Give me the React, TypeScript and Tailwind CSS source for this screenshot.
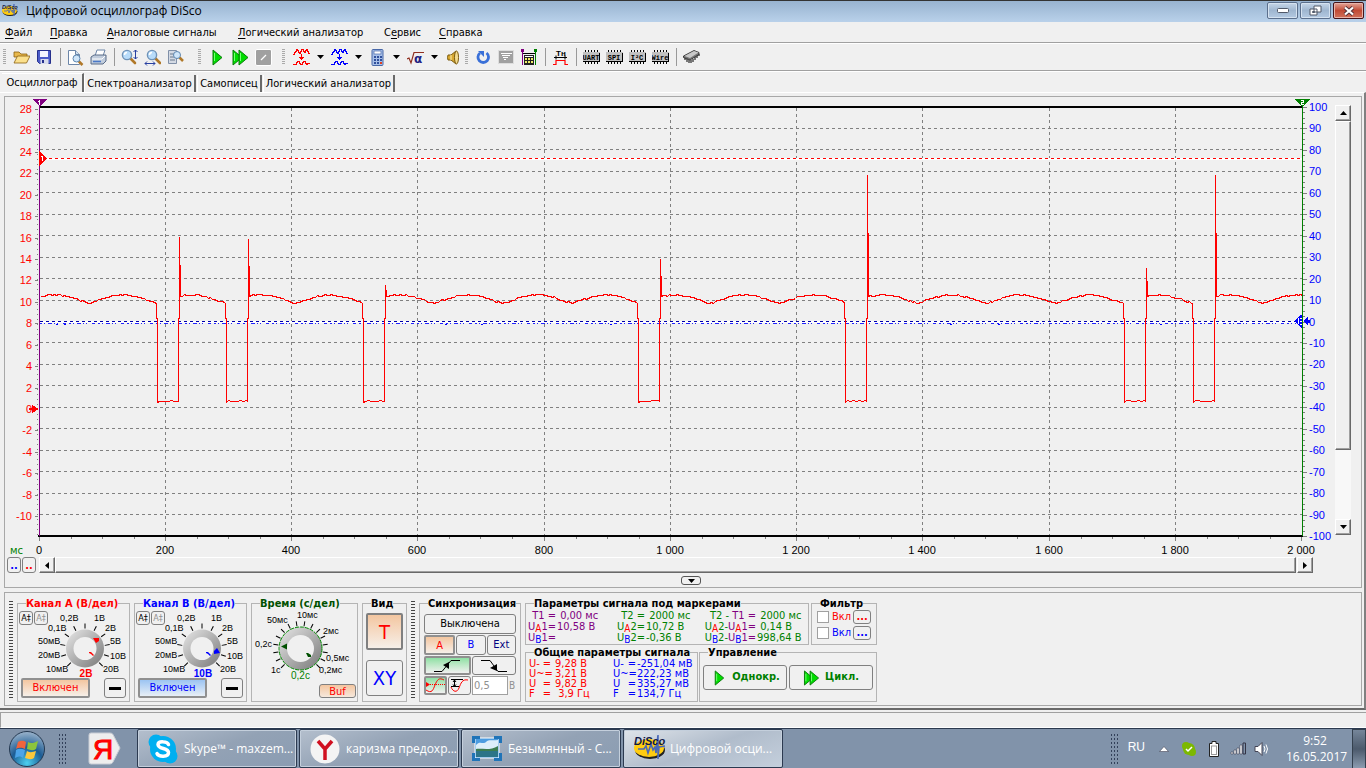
import React from 'react';

const UI = "font-['DejaVu_Sans_Condensed','Noto_Sans',sans-serif]";

const menus = [
  { pre: '', key: 'Ф', rest: 'айл', cls: 'w-[45px]' },
  { pre: '', key: 'П', rest: 'равка', cls: 'w-[57px]' },
  { pre: '', key: 'А', rest: 'налоговые сигналы', cls: 'w-[131px]' },
  { pre: '', key: 'Л', rest: 'огический анализатор', cls: 'w-[146px]' },
  { pre: 'С', key: 'е', rest: 'рвис', cls: 'w-[55px]' },
  { pre: '', key: 'С', rest: 'правка', cls: 'w-[55px]' },
];

// ---------- signal data ----------

const PULSES = [
  { drop: 157, rise: 178, top: 236 },
  { drop: 226, rise: 247, top: 238 },
  { drop: 363, rise: 384, top: 284 },
  { drop: 638, rise: 659, top: 258 },
  { drop: 845, rise: 866, top: 174 },
  { drop: 1124, rise: 1145, top: 267 },
  { drop: 1193, rise: 1214, top: 174 },
];

const noise = (n: number) => {
  const v = Math.sin(n * 12.9898) * 43758.5453;
  return v - Math.floor(v);
};

const ripple = (x: number) => {
  const s = Math.abs(Math.sin((Math.PI * (x - 88)) / 69.06));
  return Math.round(303 - 8.5 * Math.pow(s, 1.1) + (noise(x) - 0.5) * 1.4);
};

function buildSignal() {
  const pts: string[] = [];
  let x = 40;
  for (const p of PULSES) {
    for (; x < p.drop; x += 2) pts.push(`${x},${ripple(x)}`);
    pts.push(`${p.drop - 1},303`, `${p.drop - 1},318`, `${p.drop},318`, `${p.drop},402`);
    for (let b = p.drop + 2; b < p.rise; b += 3) pts.push(`${b},${noise(b) > 0.6 ? 400 : 401}`);
    const mid = Math.round(p.top + (296 - p.top) * 0.48);
    pts.push(`${p.rise},401`, `${p.rise},318`, `${p.rise + 1},318`, `${p.rise + 1},${p.top}`);
    pts.push(`${p.rise + 1},${mid}`, `${p.rise + 2},${mid}`, `${p.rise + 2},296`);
    x = p.rise + 4;
  }
  for (; x <= 1302; x += 2) pts.push(`${x},${ripple(x)}`);
  return pts.join(' ');
}

const SIGNAL = buildSignal();
const rows = Array.from({ length: 21 }, (_, i) => i);

function Scope() {
  return (
    <svg viewBox="5 97 1330 460" className="block h-auto min-w-0 flex-1" shapeRendering="crispEdges">
      {/* grid */}
      <g stroke="#808080" strokeDasharray="3 3">
        {rows.slice(1, 20).map((i) => {
          const y = Math.floor(107 + 21.45 * i) + 0.5;
          return <line key={i} x1="40" x2="1302" y1={y} y2={y} />;
        })}
        {rows.slice(1, 10).map((i) => {
          const x = Math.floor(39 + 126.25 * i) + 0.5;
          return <line key={i} y1="108" y2="535" x1={x} x2={x} />;
        })}
      </g>
      <rect x="40" y="106" width="1263" height="2" fill="#000" />
      <rect x="38" y="535" width="1265" height="2" fill="#000" />

      {/* left axis */}
      <g fontFamily="Liberation Sans, sans-serif" fontSize="11" fill="#f00" textAnchor="end">
        {rows.slice(0, 20).map((i) => {
          const y = Math.round(109 + 21.43 * i);
          return (
            <g key={i}>
              <text x="32" y={y + 4}>{28 - 2 * i}</text>
              <rect x="35" y={y} width="3" height="1" fill="#808080" />
            </g>
          );
        })}
      </g>
      <line x1="37.5" x2="37.5" y1="109" y2="535" stroke="#808080" strokeDasharray="1 4" />

      {/* right axis */}
      <g fontFamily="Liberation Sans, sans-serif" fontSize="11" fill="#00f">
        {rows.map((i) => {
          const y = Math.round(107 + 21.45 * i);
          return (
            <g key={i}>
              <text x="1309" y={y + 4}>{100 - 10 * i}</text>
              <rect x="1303" y={y} width="4" height="1" fill="#808080" />
              {i < 20 && [1, 2, 3].map((m) => (
                <rect key={m} x="1303" y={Math.round(y + 5.36 * m)} width="2" height="1" fill="#808080" />
              ))}
            </g>
          );
        })}
      </g>

      {/* time axis */}
      <g fontFamily="Liberation Sans, sans-serif" fontSize="11" textAnchor="middle">
        {rows.slice(0, 11).map((i) => {
          const x = Math.floor(39 + 126.25 * i);
          const v = i * 200;
          return (
            <g key={i}>
              <text x={x} y="554">{v < 1000 ? v : `${Math.floor(v / 1000)} ${String(v % 1000).padStart(3, '0')}`}</text>
              <rect x={x} y="537" width="1" height="4" fill="#808080" />
              {i < 10 && [1, 2, 3].map((m) => (
                <rect key={m} x={Math.round(x + 31.5 * m)} y="537" width="1" height="2" fill="#808080" />
              ))}
            </g>
          );
        })}
      </g>
      <text x="10" y="554" fontFamily="DejaVu Sans, sans-serif" fontSize="10" fill="#008000">мс</text>

      {/* trigger level and channel B */}
      <rect x="47" y="158" width="1256" height="2" fill="#fff" />
      <line x1="49" x2="1302" y1="158.5" y2="158.5" stroke="#f00" strokeDasharray="3 3" />
      <rect x="40" y="321" width="1256" height="2" fill="#fff" />
      <line x1="40" x2="1296" y1="321.5" y2="321.5" stroke="#00a" strokeDasharray="3 3" />
      <line x1="40" x2="1296" y1="323.5" y2="323.5" stroke="#22f" strokeDasharray="2 2 1 3 4 2 1 2 1 5 3 3" />
      <g fill="#00f">
        {[56, 64, 445, 481, 610, 950, 998, 1160].map((x) => (
          <rect key={x} x={x} y="324" width="2" height="1" />
        ))}
      </g>

      <polyline points={SIGNAL} fill="none" stroke="#f00" transform="translate(.5 .5)" />

      {/* markers */}
      <rect x="39" y="106" width="1" height="430" fill="#800080" />
      <rect x="1302" y="106" width="1" height="430" fill="#008000" />
      <path d="M32 99h15l-7 7h-1z" fill="#800080" />
      <path d="M1295 99h15l-7 8h-1z" fill="#008000" />
      <path d="M39 100h1v5h-1zM38 101h1v1h-1z" fill="#fff" />
      <path d="M1301 100h3v3h-2v1h2v1h-3v-3h2v-1h-2z" fill="#fff" />
      <path d="M39 151l8 7-8 8z" fill="#f00" />
      <path d="M41 156h2v5h-1v-4h-1z" fill="#fff" />
      <path d="M29 408h3v-3l7 4-7 4v-3h-3z" fill="#f00" />
      <path d="M1303 321l5-4v3h2v3h-2v2z" fill="#00f" />
      <path d="M1294 321l7-6h1v13h-1z" fill="#00f" />
      <path d="M1298 318h1v6h-1zM1300 318h2v1h-2zM1300 321h2v1h-2zM1300 324h2v1h-2z" fill="#fff" />
    </svg>
  );
}

// ---------- small parts ----------

function Grip({ className = '' }: { className?: string }) {
  return (
    <div className={`flex flex-none items-center ${className}`}>
      <div className="h-4 w-[3px] bg-[repeating-linear-gradient(#aaa_0_1px,#f0f0f0_1px_2px)]" />
    </div>
  );
}

function Sep() {
  return (
    <div className="flex w-2 flex-none items-center justify-center">
      <div className="h-[18px] w-px bg-[#999]" />
    </div>
  );
}

function Tool({ label, children, drop }: { label: string; children: React.ReactNode; drop?: boolean }) {
  return (
    <>
      <button aria-label={label} className="flex w-[23px] flex-none items-center justify-center">
        <svg width="17" height="17" viewBox="0 0 17 17">{children}</svg>
      </button>
      {drop && (
        <button aria-label={`${label} ▾`} className="flex w-[15px] flex-none items-center justify-center">
          <svg width="7" height="4" viewBox="0 0 7 4"><path d="M0 0h7L3.500 4z" /></svg>
        </button>
      )}
    </>
  );
}

function Lens({ x = 6, y = 6 }: { x?: number; y?: number }) {
  return (
    <g>
      <path d={`M${x + 3} ${y + 3}l5 5`} stroke="#b07828" strokeWidth="2.6" strokeLinecap="round" />
      <circle cx={x} cy={y} r="4.6" fill="#b8dcfa" stroke="#6f93b8" strokeWidth="1.4" />
      <path d={`M${x - 2.5} ${y}a2.6 2.6 0 0 1 2.5-2.5`} stroke="#fff" fill="none" strokeWidth="1.500" />
    </g>
  );
}

function Waves({ color }: { color: string }) {
  return (
    <g stroke={color} fill="none" shapeRendering="crispEdges">
      <path d="M0 5.500h1v-2h1v-1h1v-2h1v1h1v2h1v1h1v-2h1v-2h2v2h1v1h1v-2h1v-1h1v2h1v2h2" />
      <path d="M0 15.500h3v-2h1v-1h2v2h1v1h2v-2h1v-1h2v2h1v1h1v-1h3" />
      <path d="M8.500 5v3" />
      <path d="M6 8h5v1h-1v1H9v1H8v-1H7V9H6z" fill={color} stroke="none" />
    </g>
  );
}

function BusChip({ name }: { name: string }) {
  return (
    <g>
      <g shapeRendering="crispEdges">
        <path d="M2.500 1v3M5.500 1v3M8.500 1v3M11.500 1v3M14.500 1v3M2.500 12v3M5.500 12v3M8.500 12v3M11.500 12v3M14.500 12v3" stroke="#000" />
        <rect x="0" y="3" width="17" height="10" fill="#c0c0c0" />
        <path d="M0 12.500h16.500V4" stroke="#000" fill="none" />
      </g>
      <text x="8" y="11" textAnchor="middle" fontFamily="Liberation Mono, monospace" fontWeight="bold" fontSize="7">{name}</text>
    </g>
  );
}

function Play({ double }: { double?: boolean }) {
  const tri = 'M1 1l9 7.500-9 7.500z';
  return (
    <g fill="#0d0" stroke="#0a7a0a">
      <path d={tri} />
      {double && <path d={tri} transform="translate(6)" />}
      <path d="M2.500 4v8" stroke="#7f7" />
      {double && <path d="M8.500 4v8" stroke="#7f7" />}
    </g>
  );
}

function DiscoLogo({ size }: { size: string }) {
  return (
    <svg viewBox="0 0 32 32" className={size}>
      <ellipse cx="16" cy="17" rx="15" ry="9" fill="#222" />
      <ellipse cx="15" cy="15" rx="15" ry="9" fill="#fc1" />
      <path d="M4 16h6l2-3 2 7 3-9 2 6 2-3 1 6 2-18v24l1-12 6-1" stroke="#4a68b8" strokeWidth="1.6" fill="none" />
      <text x="0" y="12" fontFamily="Liberation Sans, sans-serif" fontWeight="bold" fontStyle="italic" fontSize="11" fill="#101848">DiSco</text>
    </svg>
  );
}

function Group({ title, color = 'text-black', className, children }: { title: string; color?: string; className: string; children: React.ReactNode }) {
  return (
    <fieldset className={`min-w-0 border border-[#b4b4b4] ${className}`}>
      <legend className={`ml-2 text-[11px] leading-[13px] font-bold whitespace-nowrap ${color}`}>{title}</legend>
      {children}
    </fieldset>
  );
}

const flat = 'flex items-center justify-center rounded-[3px] border border-[#808080] bg-[#f0f0f0]';
const raised = 'bg-[#f0f0f0] border border-t-white border-l-white border-r-[#696969] border-b-[#696969] shadow-[inset_-1px_-1px_0_#a0a0a0]';

const knobLabels: [string, number, number][] = [
  ['10мВ', 46, 82], ['20мВ', 38, 68], ['50мВ', 38, 54], ['0,1В', 48, 41], ['0,2В', 60, 31],
  ['1В', 94, 31], ['2В', 105, 41], ['5В', 110, 54], ['10В', 110, 69], ['20В', 103, 82],
];

function ChannelKnob({ id, color, value, pointer }: { id: string; color: string; value: string; pointer: string }) {
  return (
    <svg viewBox="18 20 111 68" className="block h-[68px] w-full">
      <defs>
        <linearGradient id={id} x1="0" y1="0" x2="1" y2="1">
          <stop offset="0" stopColor="#e8e8e8" />
          <stop offset="1" stopColor="#777" />
        </linearGradient>
      </defs>
      {rows.slice(0, 11).map((i) => (
        <path key={i} d="M85 33.500v5" stroke="#000" transform={`rotate(${-135 + 27 * i} 85 58.500)`} />
      ))}
      <circle cx="85" cy="58.500" r="19" fill={`url(#${id})`} />
      <circle cx="85" cy="58.500" r="11.500" fill="#f0f0f0" />
      <path d={pointer} fill={color} />
      <path d="M89 62h2l3 3-1 1-2-2-2-1z" fill={color} />
      <g fontFamily="Liberation Sans, sans-serif" fontSize="9">
        {knobLabels.map(([t, x, y]) => <text key={t} x={x} y={y}>{t}</text>)}
      </g>
      <text x="86" y="87" textAnchor="middle" fontFamily="Liberation Sans, sans-serif" fontSize="10" fontWeight="bold" fill={color}>{value}</text>
    </svg>
  );
}

function Channel({ title, color, hex, id, value, pointer, on }: { title: string; color: string; hex: string; id: string; value: string; pointer: string; on: string }) {
  return (
    <Group title={title} color={color} className="w-[113px]">
      <div className="relative">
        <ChannelKnob id={id} color={hex} value={value} pointer={pointer} />
        <div className="absolute top-px left-px flex gap-px">
          <button className={`${flat} h-[14px] w-[14px] text-[9px] leading-none`}>A‡</button>
          <button className={`${flat} h-[14px] w-[14px] text-[9px] leading-none text-[#909090]`}>A‡</button>
        </div>
      </div>
      <div className="flex justify-between px-[3px]">
        <button className={`flex h-5 w-[69px] items-center justify-center rounded-[2px] border-2 border-[#909090] text-[11px] ${color} ${on}`}>Включен</button>
        <button aria-label="−" className={`${flat} h-5 w-[22px]`}><span className="h-[3px] w-3 bg-black" /></button>
      </div>
    </Group>
  );
}

function TimeKnob() {
  return (
    <svg viewBox="3 20 105 71" className="block h-[71px] w-full">
      <defs>
        <linearGradient id="kt" x1="0" y1="0" x2="1" y2="1">
          <stop offset="0" stopColor="#e8e8e8" />
          <stop offset="1" stopColor="#777" />
        </linearGradient>
      </defs>
      {rows.slice(0, 16).map((i) => (
        <path key={i} d="M51.500 31v5" stroke="#000" transform={`rotate(${-135 + 18 * i} 51.500 58.500)`} />
      ))}
      <circle cx="51.500" cy="58.500" r="21.500" fill="url(#kt)" stroke="#080" strokeDasharray="4 1" />
      <circle cx="51.500" cy="58.500" r="13.500" fill="#f0f0f0" />
      <path d="M32 56.500l6-3v6z" fill="#005000" />
      <path d="M57 63h2l3 2v2h-3z" fill="#005000" />
      <g fontFamily="Liberation Sans, sans-serif" fontSize="9">
        <text x="18" y="33">50мс</text>
        <text x="48" y="28">10мс</text>
        <text x="74" y="44">2мс</text>
        <text x="6" y="57">0,2с</text>
        <text x="77" y="71">0,5мс</text>
        <text x="22" y="83">1с</text>
        <text x="70" y="83">0,2мс</text>
        <text x="42" y="89" fontSize="10" fill="#008000">0,2с</text>
      </g>
    </svg>
  );
}

const A = () => <sub className="bottom-[-2px] text-[10px] leading-none text-[#f00]">A</sub>;
const B = () => <sub className="bottom-[-2px] text-[10px] leading-none text-[#00f]">B</sub>;
const P = ({ children }: { children: React.ReactNode }) => <span className="text-[#800080]">{children}</span>;

const totals = [
  ['U-', '9,28 В', '-251,04 мВ'],
  ['U~', '3,21 В', '222,23 мВ'],
  ['U', '9,82 В', '335,27 мВ'],
  ['F', ' 3,9 Гц', '134,7 Гц'],
];

function Controls() {
  return (
    <div className="flex h-[114px] flex-none gap-1 border border-[#a8a8a8] px-1 pt-1 pb-[3px]">
      <div className="mt-1 mb-1 h-[98px] w-1 bg-[repeating-linear-gradient(#444_0_1px,#f0f0f0_1px_3px)]" />
      <Channel title="Канал A (В/дел)" color="text-[#f00]" hex="#f00" id="ka" value="2В" pointer="M93 48h6v3l-3 2z" on="bg-linear-to-b from-[#f3c6a0] to-[#f6efe8]" />
      <Channel title="Канал B (В/дел)" color="text-[#00f]" hex="#00f" id="kb" value="10В" pointer="M97 61l3-3 3 5-6 1z" on="bg-linear-to-b from-[#9cc4f2] to-[#e8eff6]" />
      <Group title="Время (с/дел)" color="text-[#005000]" className="w-[107px]">
        <TimeKnob />
        <div className="flex justify-end pt-[3px] pr-px">
          <button className="flex h-[14px] w-[37px] items-center justify-center rounded-[3px] border border-[#808080] bg-linear-to-b from-[#f3c6a0] to-[#f6e8dc] text-[11px] leading-none text-[#f00]">Buf</button>
        </div>
      </Group>
      <Group title="Вид" className="w-[45px]">
        <div className="flex flex-col items-center gap-[10px] pt-[3px]">
          <button className="h-[37px] w-[37px] rounded-[2px] border-2 border-[#808080] bg-linear-to-b from-[#f3c6a0] to-[#f6efe8] text-xl leading-none text-[#f00]">T</button>
          <button className={`${flat} h-9 w-[37px] text-xl leading-none text-[#00f]`}>XY</button>
        </div>
      </Group>
      <div className="mt-1 mb-1 h-[98px] w-1 bg-[repeating-linear-gradient(#444_0_1px,#f0f0f0_1px_3px)]" />
      <Group title="Синхронизация" className="w-[102px]">
        <div className="flex flex-col gap-px px-1 pt-1 text-[11px]">
          <button className={`${flat} h-5`}>Выключена</button>
          <div className="flex gap-px">
            <button className="h-5 flex-1 rounded-[2px] border-2 border-[#909090] bg-linear-to-b from-[#f3c6a0] to-[#f6efe8] leading-none text-[#f00]">A</button>
            <button className={`${flat} h-5 flex-1 text-[#00f]`}>B</button>
            <button className={`${flat} h-5 flex-1 text-[#000080]`}>Ext</button>
          </div>
          <div className="flex gap-px">
            <button aria-label="↗" className="flex h-[19px] flex-1 items-center justify-center rounded-[2px] border-2 border-[#909090] bg-linear-to-b from-[#8ee0a4] to-[#f0f0f0]">
              <svg width="28" height="14" viewBox="0 0 28 14"><path d="M1 12.500h8L18 1.500h9" stroke="#000" fill="none" /><path d="M16 3l0 7-6-4z" /></svg>
            </button>
            <button aria-label="↘" className={`${flat} h-[19px] flex-1`}>
              <svg width="28" height="14" viewBox="0 0 28 14"><path d="M1 1.500h9L18 12.500h9" stroke="#000" fill="none" /><path d="M17 5l0 7-7-3z" /></svg>
            </button>
          </div>
          <div className="flex items-center gap-px">
            <button aria-label="~" className="flex h-[19px] w-[23px] items-center justify-center rounded-[2px] border-2 border-[#909090] bg-linear-to-b from-[#8ee0a4] to-[#f0f0f0]">
              <svg width="19" height="15" viewBox="0 0 19 15"><path d="M0 12c6 4 7 0 9-5s4-8 9-5" stroke="#f00" fill="none" /><path d="M4 6.500h15" stroke="#f00" strokeDasharray="1 1" /><path d="M0 4l4 2.500L0 9z" fill="#f00" /></svg>
            </button>
            <button aria-label="↕" className={`${flat} h-[19px] w-[23px]`}>
              <svg width="19" height="15" viewBox="0 0 19 15"><path d="M1 9c2 5 6 6 8 1s3-9 9-8" stroke="#f00" fill="none" /><path d="M1 1.500h12M1 8.500h8M4.500 2v6M3 4l1.500-2L6 4M3 6.500l1.500 2 1.500-2" stroke="#000" fill="none" /></svg>
            </button>
            <label className="flex items-center text-[#909090]">
              <input defaultValue="0,5" className="h-[19px] w-9 border border-[#a0a0a0] bg-white px-px text-[11px]" />
              <span className="pl-px text-[10px]">В</span>
            </label>
          </div>
        </div>
      </Group>
      <div className="flex flex-col gap-px">
        <div className="flex gap-[2px]">
          <Group title="Параметры сигнала под маркерами" className="h-12 w-[284px]">
            <div className="grid grid-cols-[28px_58px_29px_57px_52px_auto] gap-x-px pl-[2px] text-[11px] leading-[11px] whitespace-pre text-[#008000]">
              <span className="text-right"><P>T1 =</P></span><P> 0,00 мс</P>
              <span className="text-right">T2 =</span><span> 2000 мс</span>
              <span className="text-right">T2 - <P>T1 =</P></span><span> 2000 мс</span>
              <span className="text-right"><P>U<A />1=</P></span><P>10,58 В</P>
              <span className="text-right">U<A />2=</span><span>10,72 В</span>
              <span className="text-right">U<A />2-<P>U<A />1=</P></span><span> 0,14 В</span>
              <span className="text-right"><P>U<B />1=</P></span><span />
              <span className="text-right">U<B />2=</span><span>-0,36 В</span>
              <span className="text-right">U<B />2-<P>U<B />1=</P></span><span>998,64 В</span>
            </div>
          </Group>
          <Group title="Фильтр" className="h-12 w-[66px]">
            <div className="flex flex-col gap-[2px] pl-[5px] text-[11px] leading-[14px]">
              {[['text-[#f00]', 'a'], ['text-[#00f]', 'b']].map(([c, k]) => (
                <div key={k} className={`flex items-center gap-[2px] ${c}`}>
                  <label className="flex items-center gap-[3px]">
                    <input type="checkbox" className="h-3 w-3 appearance-none border border-[#a0a0a0] bg-white" />
                    Вкл
                  </label>
                  <button className={`${flat} h-[14px] w-[18px] font-bold`}>...</button>
                </div>
              ))}
            </div>
          </Group>
        </div>
        <div className="flex gap-px">
          <Group title="Общие параметры сигнала" className="h-14 w-[173px]">
            <table className="ml-[3px] text-[11px] leading-[10px] whitespace-pre">
              <tbody>
                {totals.map(([name, a, b]) => (
                  <tr key={name}>
                    <td className="w-[26px] p-0 text-[#f00]"><div className="flex w-[22px] justify-between"><span>{name}</span><span>=</span></div></td>
                    <td className="w-[58px] p-0 text-[#f00]">{a}</td>
                    <td className="w-[24px] p-0 text-[#00f]"><div className="flex w-[23px] justify-between"><span>{name}</span><span>=</span></div></td>
                    <td className="p-0 text-[#00f]">{b}</td>
                  </tr>
                ))}
              </tbody>
            </table>
          </Group>
          <Group title="Управление" className="h-14 w-[178px]">
            <div className="flex gap-[2px] px-[3px] pt-[6px] text-[11px] font-bold text-[#008000]">
              <button className={`${flat} h-[25px] flex-1 gap-1`}>
                <svg width="18" height="16" viewBox="-4 0 18 17"><Play /></svg>Однокр.
              </button>
              <button className={`${flat} h-[25px] flex-1 gap-1`}>
                <svg width="18" height="16" viewBox="0 0 18 17"><Play double /></svg>Цикл.
              </button>
            </div>
          </Group>
        </div>
      </div>
    </div>
  );
}

// ---------- window chrome ----------

function TitleBar() {
  const btn = 'flex h-[17px] w-[31px] items-center justify-center rounded-[2px] border border-[#5b6f8c] bg-linear-to-b from-[#c6d6e8] via-[#9fb6d0] to-[#b4cae2] shadow-[inset_0_0_0_1px_#d5e2f0]';
  return (
    <header className="flex h-[22px] flex-none items-start border-t border-[#333] bg-linear-to-b from-[#98b3d0] to-[#b9d1ea] font-['Open_Sans','Noto_Sans',sans-serif]">
      <div className="pt-[2px] pl-[2px]"><DiscoLogo size="h-4 w-4" /></div>
      <h1 className="flex-1 pl-2 text-[12px] leading-[20px]">Цифровой осциллограф DiSco</h1>
      <div className="flex gap-[2px] pt-px pr-[2px]">
        <button aria-label="Свернуть" className={btn}>
          <svg width="12" height="5" viewBox="0 0 12 5"><rect x=".5" y=".5" width="11" height="4" rx="1" fill="#fff" stroke="#505868" /></svg>
        </button>
        <button aria-label="Восстановить" className={btn}>
          <svg width="13" height="12" viewBox="0 0 13 12"><path d="M5 1h7v6H5zM1 4h7v6H1z" fill="#fff" stroke="#505868" /><path d="M3.500 6.500h2v1h-2z" fill="#9fb6d0" stroke="#505868" /></svg>
        </button>
        <button aria-label="Закрыть" className="flex h-[17px] w-[31px] items-center justify-center rounded-[2px] border border-[#46141a] bg-linear-to-b from-[#e3a498] via-[#c14a35] to-[#d0705a] shadow-[inset_0_0_0_1px_#e8b4aa]">
          <svg width="12" height="10" viewBox="0 0 12 10"><path d="M2 1.500l8 7M10 1.500l-8 7" stroke="#503038" strokeWidth="4" /><path d="M2 1.500l8 7M10 1.500l-8 7" stroke="#fff" strokeWidth="2.200" /></svg>
        </button>
      </div>
    </header>
  );
}

function Toolbar() {
  return (
    <div className="flex h-7 flex-none border-b border-white pb-px shadow-[inset_0_-1px_0_#a0a0a0]">
      <Grip className="w-[10px] pl-[3px]" />
      <Tool label="Открыть">
        <path d="M1 3h5l2 2h6v3H1z" fill="#e8b84c" stroke="#8a6010" strokeWidth=".8" />
        <path d="M1 14L4.500 7H17l-3.500 7z" fill="#fbe08c" stroke="#8a6010" strokeWidth=".8" />
      </Tool>
      <Tool label="Сохранить">
        <path d="M1.500 1.500h13v13h-11l-2-2z" fill="#4c5cc8" stroke="#26308c" />
        <rect x="4" y="2" width="8" height="6" fill="#f4f6ff" />
        <rect x="4.500" y="10" width="8" height="5" fill="#d8dcec" /><rect x="6" y="11" width="2" height="3" fill="#26308c" />
      </Tool>
      <Sep />
      <Tool label="Просмотр">
        <path d="M1.500 1.500h7l4 4v10h-11z" fill="#fff" stroke="#6c86a8" /><path d="M8.500 1.500v4h4" fill="#cfe0f0" stroke="#6c86a8" />
        <path d="M11.500 12l4 4" stroke="#b07828" strokeWidth="2.500" /><circle cx="9.500" cy="9.500" r="3.500" fill="#cfe6fa" stroke="#5f87b0" />
      </Tool>
      <Tool label="Печать">
        <path d="M5 7l2-6h8l-2 6z" fill="#fff" stroke="#6c86a8" />
        <path d="M1 8l3-2h12v6l-3 3H1z" fill="#c0ccdc" stroke="#5a6c88" /><path d="M2 10h10l3-3" stroke="#fff" fill="none" /><path d="M3 12.500h8" stroke="#4a78c8" strokeWidth="1.500" />
      </Tool>
      <Sep />
      <Tool label="Масштаб Y"><Lens /><path d="M14.500 1v9M12.500 3l2-2 2 2M12.500 8l2 2 2-2" stroke="#2840a0" fill="none" /></Tool>
      <Tool label="Масштаб X"><Lens x={8} /><path d="M1 14.500h10M3 12.500l-2 2 2 2M9 12.500l2 2-2 2" stroke="#2840a0" fill="none" /></Tool>
      <Tool label="Лупа">
        <path d="M1.500 1.500h8v13h-8z" fill="#d4dae4" stroke="#8090a8" /><path d="M3 5h5M3 8h5M3 11h5" stroke="#68788c" />
        <path d="M12 8l4 4" stroke="#b07828" strokeWidth="2.500" /><circle cx="10" cy="6" r="3.500" fill="#cfe6fa" stroke="#5f87b0" />
      </Tool>
      <Grip className="w-[19px] pl-[11px]" />
      <Tool label="Однократно"><g transform="translate(3)"><Play /></g></Tool>
      <Tool label="Циклически"><Play double /></Tool>
      <Tool label="Стоп"><rect x=".5" y=".5" width="16" height="16" rx="1.500" fill="#a0a0a0" stroke="#fff" /><path d="M6 11l5-5" stroke="#fff" strokeWidth="1.200" /></Tool>
      <Grip className="w-[15px] pl-[7px]" />
      <Tool label="Канал A" drop><Waves color="#f00" /></Tool>
      <Tool label="Канал B" drop><Waves color="#00f" /></Tool>
      <Tool label="Измерения" drop>
        <rect x="3" y=".5" width="11" height="16" rx="1" fill="#a8c0e8" stroke="#4868a8" /><rect x="5" y="2" width="7" height="3" fill="#fff" stroke="#4868a8" strokeWidth=".7" />
        <path d="M5 8h2M8 8h2M11 8h2M5 11h2M8 11h2M11 11h2M5 14h2M8 14h2" stroke="#30509c" strokeWidth="2" /><path d="M11 14h2" stroke="#e04020" strokeWidth="2" />
      </Tool>
      <Tool label="Функции" drop>
        <path d="M0 10l2-1 2 5L7 3.500h10" stroke="#903020" fill="none" strokeWidth="1.200" />
        <text x="7" y="14" fontFamily="DejaVu Sans, sans-serif" fontSize="12" fontWeight="bold" fill="#202080">α</text>
      </Tool>
      <Tool label="Звук">
        <path d="M3 6h3l5-4v13l-5-4H3q-1-2.500 0-5z" fill="#d8a830" stroke="#7c5c10" /><path d="M6 6v5" stroke="#fff0b0" /><ellipse cx="11.500" cy="8.500" rx="2" ry="6.500" fill="#f4dc90" stroke="#7c5c10" />
      </Tool>
      <Grip className="w-[7px]" />
      <Tool label="Обновить">
        <path d="M5 4a5.300 5.300 0 1 0 6.500 0" fill="none" stroke="#3a70d8" strokeWidth="2.800" /><path d="M3 2h6v6z" fill="#3a70d8" />
      </Tool>
      <Tool label="Фильтр"><rect x=".5" y="1.500" width="15" height="13" fill="#a0a0a0" stroke="#ddd" /><path d="M3 4.500h11M4 6.500h8M5 8.500h5M6 10.500h2" stroke="#fff" /></Tool>
      <Tool label="Маркеры">
        <g shapeRendering="crispEdges">
          <path d="M1.500 1v15" stroke="#800080" /><path d="M14.500 1v15" stroke="#008000" />
          <path d="M0 0h3v3H0z" fill="#800080" /><path d="M13 0h3v3h-3z" fill="#008000" /><path d="M2 4.500h12" stroke="#000" />
          <rect x="3" y="6" width="10" height="10" fill="#222" /><path d="M4 7.500h8" stroke="#fff" /><path d="M4 10h8M4 13h8" stroke="#ee6" strokeWidth="2" strokeDasharray="2 1" />
        </g>
      </Tool>
      <Sep />
      <Tool label="Период">
        <text x="4" y="7" fontFamily="Liberation Sans, sans-serif" fontWeight="bold" fontSize="8">Tн</text>
        <path d="M2 8.500h13M4 6.500v4M13 6.500v4" stroke="#000" /><path d="M1 15.500h3v-4h9v4h3" stroke="#f00" strokeWidth="1.200" fill="none" />
      </Tool>
      <Sep />
      <Tool label="UART"><BusChip name="UART" /></Tool>
      <Tool label="SPI"><BusChip name="SPI" /></Tool>
      <Tool label="I²C"><BusChip name="I²C" /></Tool>
      <Tool label="1-Wire"><BusChip name="Wire" /></Tool>
      <Sep />
      <Tool label="Микросхема">
        <path d="M2 9v2M4 10v3M6 11v3M8 11v3M10 10v3M12 8v3M14 6v3M16 5v2" stroke="#000" strokeDasharray="2 0" /><path d="M.500 7L11 1.500l5 2v2L7 11 .500 8.500z" fill="#777" stroke="#222" strokeWidth=".8" /><path d="M1.500 7L11 2l4.500 1.600L7 9z" fill="#c8c8c8" />
      </Tool>
    </div>
  );
}

function Tabs() {
  const idle = 'h-[17px] border-r-2 border-l border-r-[#696969] border-l-white leading-none';
  return (
    <nav className="flex h-5 flex-none items-end pl-[2px] text-[11px]">
      <button className="h-[19px] w-[82px] border-t border-r-2 border-t-white border-r-[#696969] pb-px leading-none">Осциллограф</button>
      <button className={`${idle} w-[112px]`}>Спектроанализатор</button>
      <button className={`${idle} ml-px w-[65px]`}>Самописец</button>
      <button className={`${idle} ml-px w-[132px]`}>Логический анализатор</button>
    </nav>
  );
}

function Taskbar() {
  const task = 'flex h-[39px] w-40 min-w-0 items-center gap-[6px] rounded-[2px] border border-[#2c3a50] px-[10px] shadow-[inset_0_0_0_1px_#c4cfdc]';
  const idle = 'bg-linear-160 from-[#b4bfcd] via-[#93a2b5] to-[#8a9cb2]';
  return (
    <footer className="flex h-10 flex-none items-center border-t border-[#2c3a50] bg-[#8193aa] font-['Open_Sans','Noto_Sans',sans-serif] text-[12px] text-white">
      <button aria-label="Пуск" className="ml-2 flex-none">
        <svg width="38" height="38" viewBox="0 0 38 38">
          <defs><radialGradient id="orb" cx=".5" cy=".9" r=".9"><stop offset="0" stopColor="#4cd0f0" /><stop offset=".5" stopColor="#1c5c94" /><stop offset="1" stopColor="#9cb4cc" /></radialGradient></defs>
          <circle cx="19" cy="19" r="17.500" fill="url(#orb)" stroke="#243850" />
          <path d="M10 12c3-2 6-1 8 0l-1 7c-3-1-5-2-9 0z" fill="#f0643c" />
          <path d="M20 12c3 2 6 1 10-1l-2 8c-3 2-6 1-9 0z" fill="#8cc43c" />
          <path d="M8 20c3-2 6-1 9 0l-2 8c-2-2-5-2-8 0z" fill="#4ca4e8" />
          <path d="M19 21c3 2 6 1 9 0l-2 7c-3 2-6 1-9 0z" fill="#fcc83c" />
        </svg>
      </button>
      <div className="ml-3 h-8 w-2 flex-none bg-[radial-gradient(#33415a_1px,transparent_1px)] bg-size-[3px_4px]" />
      <button aria-label="Яндекс" className="ml-[22px] flex-none">
        <svg width="33" height="33" viewBox="0 0 33 33">
          <path d="M3 1h19q2 0 3 1.500L32 16l-7 14q-1 2-3 2H3q-2 0-2-2V3q0-2 2-2z" fill="#eee" stroke="#c8ccd4" />
          <text x="5" y="27" fontFamily="Liberation Sans, sans-serif" fontSize="28" fill="#f00" stroke="#f00">Я</text>
        </svg>
      </button>
      <div className="ml-4 flex flex-none gap-[2px]">
        <button className={`${task} ${idle}`}>
          <svg width="30" height="30" viewBox="0 0 30 30" className="flex-none"><circle cx="15" cy="15" r="13" fill="#00aff0" /><circle cx="8" cy="8" r="7.500" fill="#00aff0" /><circle cx="22" cy="22" r="7.500" fill="#00aff0" /><path d="M20.500 10.500c-1-3-10-4-10.500 0 0 5 10.500 3 10.500 8 0 5-10 4.500-11.500 1" stroke="#fff" strokeWidth="3.500" fill="none" strokeLinecap="round" /></svg>
          <span className="whitespace-nowrap">Skype™ - maxzem...</span>
        </button>
        <button className={`${task} ${idle}`}>
          <svg width="30" height="30" viewBox="0 0 30 30" className="flex-none"><circle cx="15" cy="15" r="14.500" fill="#f4f4f4" /><path d="M8 7l7 8 7-8M15 14v12" stroke="#d01020" strokeWidth="3.500" fill="none" /></svg>
          <span className="whitespace-nowrap">каризма предохр...</span>
        </button>
        <button className={`${task} ${idle}`}>
          <svg width="30" height="30" viewBox="0 0 30 30" className="flex-none">
            <rect x="3" y="4" width="24" height="20" fill="#4c9ce0" stroke="#fff" />
            <path d="M4 11c4-5 7 0 10-3s6-1 12-2v9H4z" fill="#dceefa" />
            <path d="M4 15c6-1 14 2 22-3v6H4z" fill="#3c7c50" />
            <path d="M4 17h22v6H4z" fill="#2c7488" />
            <path d="M1.500 9V3.500H8M22 3.500h6.500V9M28.500 19v6.500H22M8 25.500H1.500V19" stroke="#2074b8" strokeWidth="3" fill="none" />
          </svg>
          <span className="whitespace-nowrap">Безымянный - С...</span>
        </button>
        <button className={`${task} bg-linear-160 from-[#dfe4ea] via-[#b0bccb] to-[#c4cfdc]`}>
          <DiscoLogo size="h-8 w-8 flex-none" />
          <span className="-ml-[2px] whitespace-nowrap">Цифровой осци...</span>
        </button>
      </div>
      <div className="ml-auto flex flex-none items-center">
        <div className="h-8 w-2 bg-[radial-gradient(#33415a_1px,transparent_1px)] bg-size-[3px_4px]" />
        <span className="ml-[10px] pb-1 font-['Liberation_Sans',sans-serif]">RU</span>
        <svg width="10" height="6" viewBox="0 0 10 6" className="ml-[14px]"><path d="M5 .5L9.500 5.500h-9z" fill="#fff" stroke="#445" strokeWidth=".6" /></svg>
        <svg width="14" height="14" viewBox="0 0 14 14" className="ml-[13px]"><circle cx="7" cy="7" r="6" fill="#7cb800" /><circle cx="4" cy="4" r="4" fill="#7cb800" /><circle cx="10" cy="10" r="4" fill="#7cb800" /><path d="M4 7l2 2 4-4" stroke="#fff" strokeWidth="1.500" fill="none" /></svg>
        <svg width="12" height="16" viewBox="0 0 12 16" className="ml-3"><path d="M4 .5h4v2h2.500v13h-9v-13H4z" fill="#fff" stroke="#222" /><rect x="3.500" y="5" width="5" height="8.500" fill="#fff" stroke="#999" /></svg>
        <svg width="17" height="13" viewBox="0 0 17 13" className="ml-[10px]"><path d="M1 10h2v2H1zM4 8h2v4H4zM7 6h2v6H7zM10 3h2v9h-2z" fill="#fff" stroke="#445" strokeWidth=".6" /><path d="M13 1h2.500v11H13z" fill="#8193aa" stroke="#334" /></svg>
        <svg width="16" height="14" viewBox="0 0 16 14" className="ml-[7px]"><path d="M1 4.500h3l4-4v13l-4-4H1z" fill="#fff" stroke="#445" /><path d="M10 4q2 3 0 6M12 2.500q3 4.500 0 9" stroke="#fff" fill="none" /></svg>
        <time className="ml-4 w-[58px] text-center leading-4 whitespace-nowrap">9:52<br />16.05.2017</time>
        <button aria-label="Рабочий стол" className="ml-2 h-10 w-[14px] border border-[#34404e] bg-linear-to-b from-[#76869a] via-[#4c5a6c] to-[#8c9cb0]" />
      </div>
    </footer>
  );
}

const tri = {
  up: 'M0 4h7L3.500 0z',
  down: 'M0 0h7L3.500 4z',
};

export default function App() {
  return (
    <div className={`flex min-h-screen flex-col bg-[#f0f0f0] text-black ${UI}`}>
      <TitleBar />
      <nav className="flex h-[22px] flex-none border-b border-white pt-px pl-[5px] text-[11px] shadow-[inset_0_-1px_0_#a0a0a0]">
        {menus.map((m) => (
          <button key={m.rest} className={`flex-none text-left whitespace-nowrap ${m.cls}`}>
            {m.pre}<span className="underline underline-offset-2">{m.key}</span>{m.rest}
          </button>
        ))}
      </nav>
      <Toolbar />
      <Tabs />

      <main className="flex flex-1 flex-col gap-1 border-t border-r-2 border-b-2 border-t-white border-r-[#808080] border-b-[#696969] pt-[3px] pr-[2px] pb-[2px] pl-1">
        <section className="flex flex-1 flex-col border border-[#a8a8a8]">
          <div className="flex">
            <Scope />
            <div className="mt-2 mr-[10px] mb-[22px] flex w-4 flex-none flex-col bg-[#f8f8f8]">
              <button aria-label="▲" className={`flex h-4 items-center justify-center ${raised}`}><svg width="7" height="4"><path d={tri.up} /></svg></button>
              <div className={`basis-[329px] ${raised}`} />
              <div className="flex-1" />
              <button aria-label="▼" className={`flex h-4 items-center justify-center ${raised}`}><svg width="7" height="4"><path d={tri.down} /></svg></button>
            </div>
          </div>
          <div className="flex h-4 flex-none pr-[48px] pl-[2px]">
            <button className={`${flat} w-[14px] text-[11px] leading-none font-bold text-[#00f]`}>..</button>
            <button className={`${flat} ml-px w-[14px] text-[11px] leading-none font-bold text-[#f00]`}>..</button>
            <button aria-label="◀" className={`ml-[3px] flex w-4 items-center justify-center ${raised}`}><svg width="4" height="7"><path d="M4 0v7L0 3.500z" /></svg></button>
            <div className={`flex-1 ${raised}`} />
            <button aria-label="▶" className={`ml-px flex w-4 items-center justify-center ${raised}`}><svg width="4" height="7"><path d="M0 0v7L4 3.500z" /></svg></button>
          </div>
          <div className="mt-[3px] flex justify-center pl-4">
            <button aria-label="▼" className="flex h-[9px] w-5 items-center justify-center rounded-[3px] border border-[#555]"><svg width="7" height="4"><path d={tri.down} /></svg></button>
          </div>
        </section>
        <Controls />
      </main>

      <div className="mt-[2px] h-4 flex-none border-t border-b border-l border-t-[#a0a0a0] border-b-white border-l-[#a0a0a0]" />
      <Taskbar />
    </div>
  );
}
